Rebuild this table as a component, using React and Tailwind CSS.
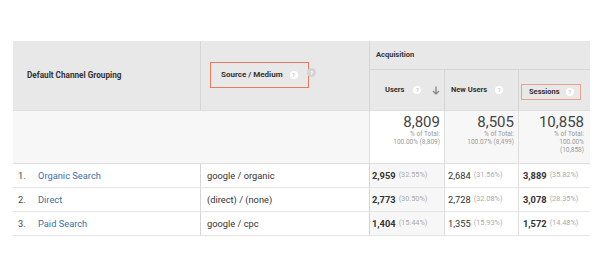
import React from "react";

const Q = ({ className = "" }) => (
  <span className={"inline-flex items-center justify-center w-[8px] h-[8px] rounded-full bg-white text-[#c8c8c8] text-[6px] leading-none font-bold " + className}>?</span>
);

const rows = [
  ["1.", "Organic Search", "google / organic", "2,959", "(32.55%)", "2,684", "(31.56%)", "3,889", "(35.82%)"],
  ["2.", "Direct", "(direct) / (none)", "2,773", "(30.50%)", "2,728", "(32.08%)", "3,078", "(28.35%)"],
  ["3.", "Paid Search", "google / cpc", "1,404", "(15.44%)", "1,355", "(15.93%)", "1,572", "(14.48%)"],
];

export default function App() {
  return (
    <div className="w-[604px] h-[280px] bg-white pt-[41px] pl-[13px]" style={{ fontFamily: "Roboto, 'Liberation Sans', sans-serif" }}>
      <div className="grid grid-cols-[188px_169px_75px_74px_71px] w-[577px] text-[#333]">
        {/* header */}
        <div className="row-span-2 bg-[#e8e8e8] border-r border-[#d6d6d6] flex items-center pl-[14px] text-[8.2px] font-bold h-[69px]">Default Channel Grouping</div>
        <div className="row-span-2 bg-[#e8e8e8] border-r border-[#d6d6d6] relative h-[69px]">
          <div className="absolute left-[9px] top-[21px] w-[99px] h-[26px] border border-[#e87a5e] flex items-center pl-[10px] text-[8px] font-bold">
            Source / Medium <Q className="ml-[7px]" />
          </div>
          <span className="absolute left-[106px] top-[27px] w-[9px] h-[9px] rounded-full bg-[#d4d4d4] text-white text-[6px] leading-[9px] text-center font-bold">?</span>
        </div>
        <div className="col-span-3 bg-[#e8e8e8] h-[29px] border-b border-[#d6d6d6] flex items-center pl-[6px] text-[7.5px] font-bold">Acquisition</div>
        <div className="bg-[#e8e8e8] h-[40px] border-r border-[#d6d6d6] flex items-center pl-[15px] pr-[4px] text-[7.5px] font-bold">
          Users <Q className="ml-[9px]" />
          <svg className="ml-auto" width="8" height="9" viewBox="0 0 8 9" fill="none" stroke="#8a8a8a" strokeWidth="1.4">
            <path d="M4 0.5V8M1 5l3 3 3-3" />
          </svg>
        </div>
        <div className="bg-[#e8e8e8] h-[40px] border-r border-[#d6d6d6] flex items-center pl-[6px] text-[7.5px] font-bold">
          New Users <Q className="ml-[8px]" />
        </div>
        <div className="bg-[#e8e8e8] h-[40px] relative">
          <div className="absolute left-[2px] top-[14px] w-[60px] h-[16px] border border-[#e8a090] flex items-center pl-[7px] text-[7.5px] font-bold">
            Sessions <Q className="ml-[6px]" />
          </div>
        </div>

        {/* summary */}
        <div className="col-span-2 bg-[#f7f7f7] h-[54px] border-t border-b border-[#dedede] border-r"></div>
        <div className="bg-white h-[54px] border-t border-b border-r border-[#dedede] flex flex-col items-end pr-[4px] pt-[3px]">
          <div className="text-[15px] leading-[16px] text-[#444]">8,809</div>
          <div className="text-[6.5px] leading-[8px] text-[#9a9a9a]">% of Total:</div>
          <div className="text-[6.5px] leading-[8px] text-[#9a9a9a]">100.00% (8,809)</div>
        </div>
        <div className="bg-[#f7f7f7] h-[54px] border-t border-b border-r border-[#dedede] flex flex-col items-end pr-[4px] pt-[3px]">
          <div className="text-[15px] leading-[16px] text-[#444]">8,505</div>
          <div className="text-[6.5px] leading-[8px] text-[#9a9a9a]">% of Total:</div>
          <div className="text-[6.5px] leading-[8px] text-[#9a9a9a]">100.07% (8,499)</div>
        </div>
        <div className="bg-[#f7f7f7] h-[54px] border-t border-b border-[#dedede] flex flex-col items-end pr-[6px] pt-[3px]">
          <div className="text-[15px] leading-[16px] text-[#444]">10,858</div>
          <div className="text-[6.5px] leading-[8px] text-[#9a9a9a]">% of Total:</div>
          <div className="text-[6.5px] leading-[8px] text-[#9a9a9a]">100.00%</div>
          <div className="text-[6.5px] leading-[8px] text-[#9a9a9a]">(10,858)</div>
        </div>

        {/* rows */}
        {rows.map((r, i) => (
          <React.Fragment key={i}>
            <div className="h-[24px] border-b border-[#e4e4e4] border-r border-r-[#d6d6d6] flex items-center pl-[5px] text-[9.3px]">
              <span className="w-[20px] text-[#444]">{r[0]}</span>
              <span className="text-[#3b6fa8]">{r[1]}</span>
            </div>
            <div className="h-[24px] border-b border-[#e4e4e4] border-r border-r-[#d6d6d6] flex items-center pl-[6px] text-[9.3px] text-[#333]">{r[2]}</div>
            <div className="h-[24px] bg-[#f7f7f7] border-b border-[#e4e4e4] border-r border-r-[#dedede] flex items-center pl-[2px] gap-[3px]">
              <span className="text-[9.3px] font-bold text-[#333]">{r[3]}</span>
              <span className="text-[7.3px] text-[#aaa]">{r[4]}</span>
            </div>
            <div className="h-[24px] border-b border-[#e4e4e4] border-r border-r-[#dedede] flex items-center pl-[3px] gap-[3px]">
              <span className="text-[9.3px] text-[#333]">{r[5]}</span>
              <span className="text-[7.3px] text-[#aaa]">{r[6]}</span>
            </div>
            <div className="h-[24px] border-b border-[#e4e4e4] flex items-center pl-[4px] gap-[3px]">
              <span className="text-[9.3px] font-bold text-[#333]">{r[7]}</span>
              <span className="text-[7.3px] text-[#aaa]">{r[8]}</span>
            </div>
          </React.Fragment>
        ))}
      </div>
    </div>
  );
}
